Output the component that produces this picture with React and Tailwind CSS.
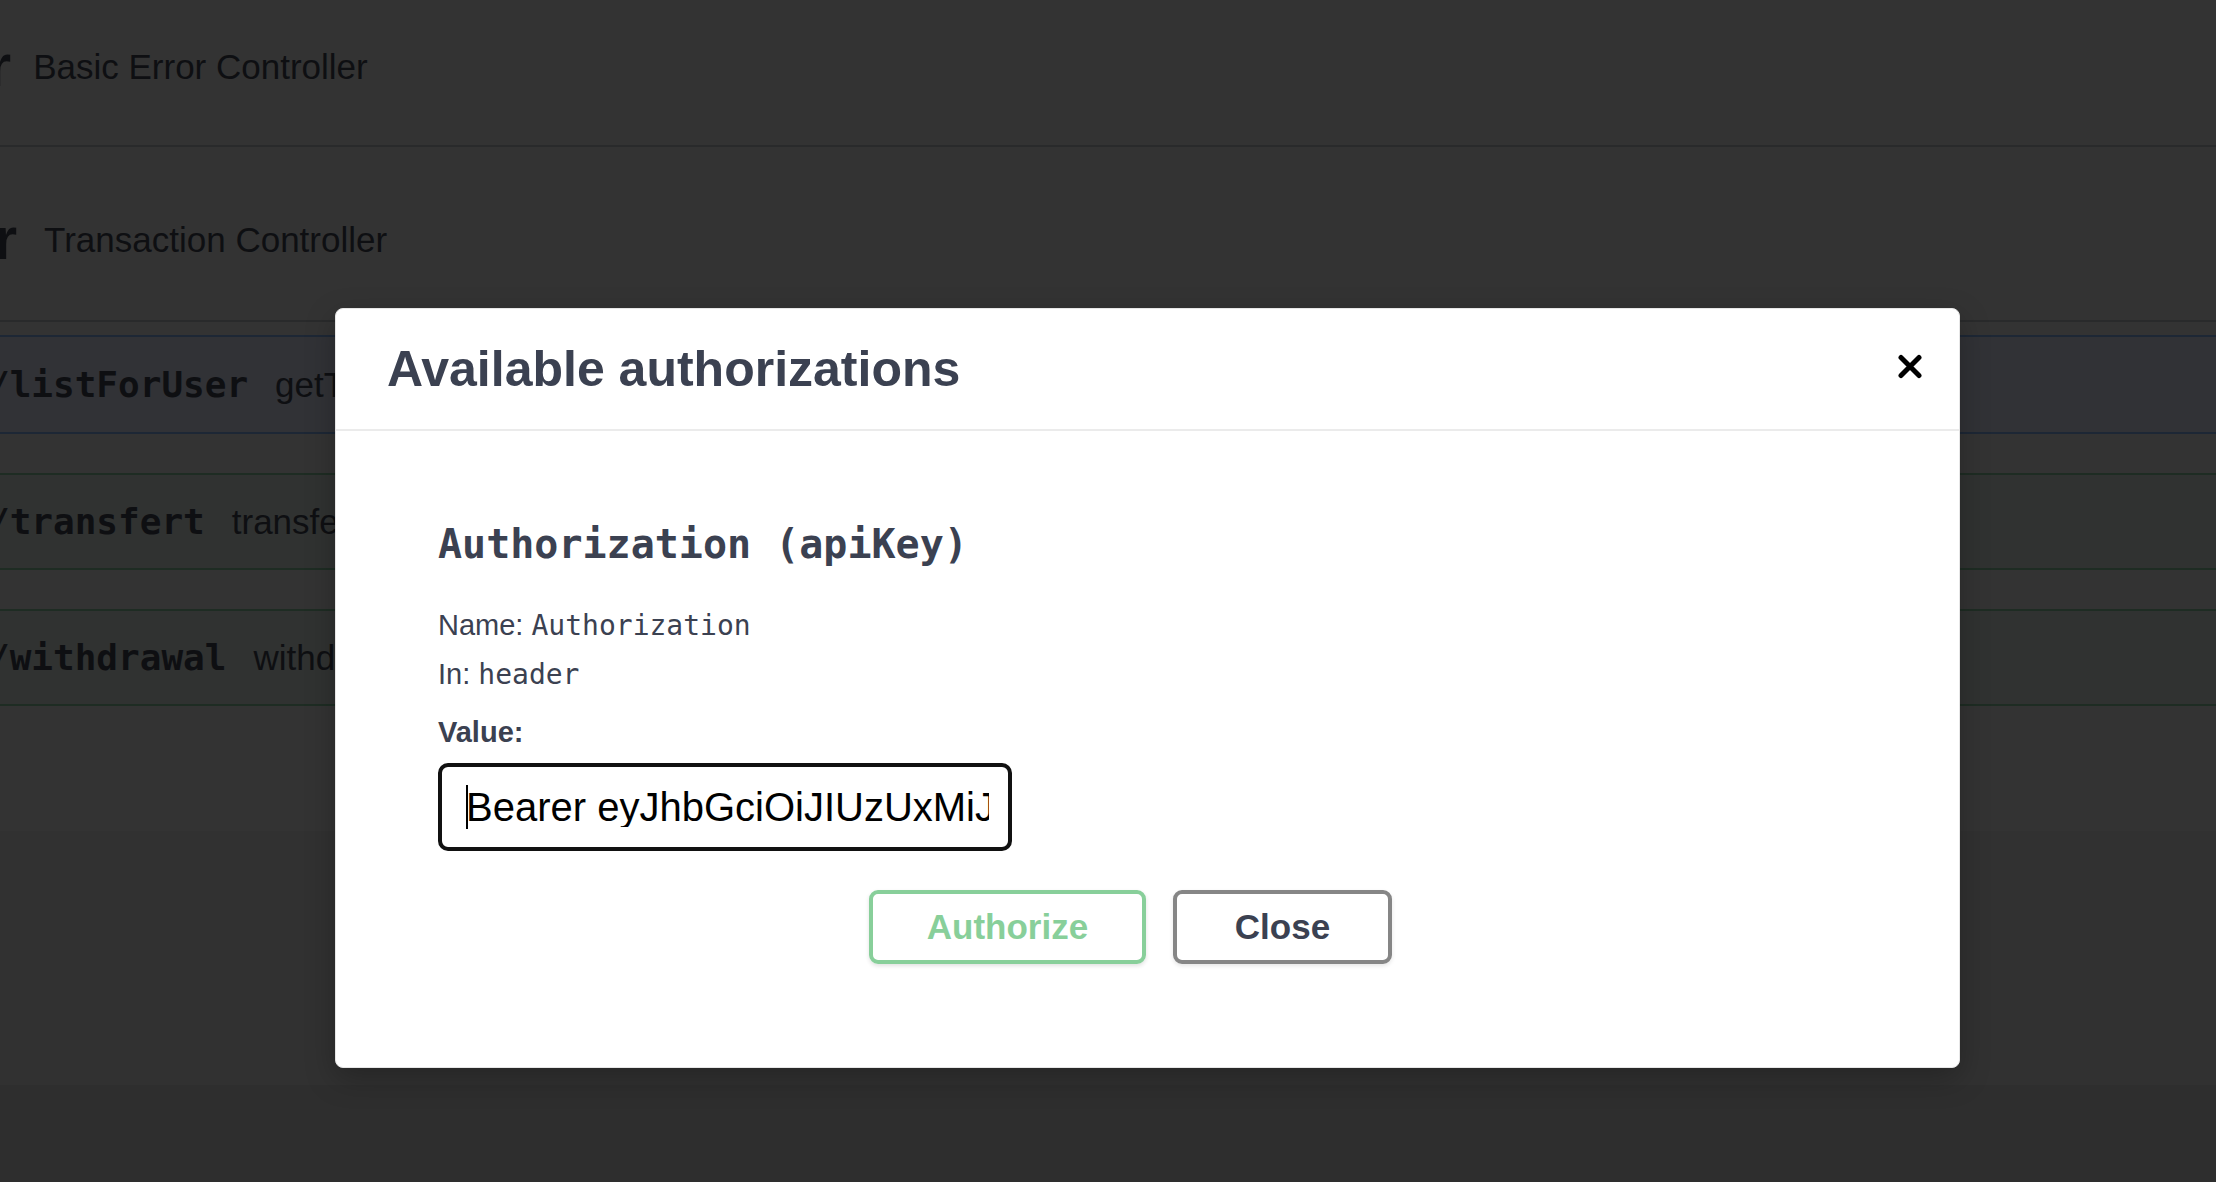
const mono = "font-['DejaVu_Sans_Mono','Liberation_Mono',monospace]";

function TagHeader({ name, title, nameShift, gap, height, pad }) {
  return (
    <div className={`flex items-center border-b-2 border-[#292a2b] ${height} ${pad}`}>
      <span className={`text-[60px] leading-none font-bold whitespace-nowrap ${nameShift}`}>{name}</span>
      <span className={`text-[35px] leading-none whitespace-nowrap ${gap}`}>{title}</span>
    </div>
  );
}

function OpRow({ path, summary, kind, height }) {
  const tone =
    kind === "get"
      ? "border-[#1d2735] bg-[#313236]"
      : "border-[#1e2c23] bg-[#303231]";
  return (
    <div className={`flex items-center border-y-2 ${tone} ${height}`}>
      <span className={`${mono} -ml-[12px] text-[36px] leading-none font-bold whitespace-nowrap`}>{path}</span>
      <span className="ml-[27px] text-[35px] leading-none whitespace-nowrap">{summary}</span>
    </div>
  );
}

function AuthModal() {
  return (
    <div className="absolute left-[335px] top-[308px] w-[1625px] overflow-hidden rounded-[8px] border border-[#e6e6e6] bg-white text-[#3b4151] shadow-[0_10px_30px_rgba(0,0,0,0.25)]">
      <div className="flex h-[122px] items-center justify-between border-b-2 border-[#ebebeb] pl-[51px] pr-[37px]">
        <h3 className="text-[50px] leading-none font-bold">Available authorizations</h3>
        <svg width="24" height="25" viewBox="0 0 24 25" className="-mt-[6px] text-black">
          <path d="M3 3.5 21 21.5M21 3.5 3 21.5" stroke="currentColor" strokeWidth="5" strokeLinecap="round" />
        </svg>
      </div>

      <div className="px-[102px] pt-[93px] pb-[103px]">
        <h4 className={`${mono} text-[40px] leading-none font-bold`}>Authorization (apiKey)</h4>
        <p className="mt-[47px] text-[29px] leading-none">
          Name: <span className={`${mono} text-[28px]`}>Authorization</span>
        </p>
        <p className="mt-[20px] text-[29px] leading-none">
          In: <span className={`${mono} text-[28px]`}>header</span>
        </p>
        <p className="mt-[29px] text-[29px] leading-none font-bold">Value:</p>

        <div className="mt-[16px] flex h-[88px] w-[574px] items-center rounded-[10px] border-4 border-[#111111] pl-[24px] pr-[19px]">
          <span className="h-[44px] w-[2px] shrink-0 bg-black" />
          <span className="-ml-[2px] overflow-hidden text-[40px] leading-none whitespace-nowrap text-black">
            Bearer eyJhbGciOiJIUzUxMiJ9.eyJzdWIiOiJ1c2VyQG1haWwuY29tIn0
          </span>
        </div>

        <div className="mt-[39px] flex justify-center gap-[27px] pr-[34px]">
          <button className="h-[74px] w-[277px] rounded-[9px] border-4 border-[#88cf9a] text-[35px] font-bold text-[#88cf9a] shadow-[0_2px_4px_rgba(0,0,0,0.12)]">
            Authorize
          </button>
          <button className="h-[74px] w-[219px] rounded-[9px] border-4 border-[#868686] text-[35px] font-bold text-[#3b4151] shadow-[0_2px_4px_rgba(0,0,0,0.1)]">
            Close
          </button>
        </div>
      </div>
    </div>
  );
}

export default function App() {
  return (
    <div className="relative h-[1182px] w-full overflow-hidden bg-[#2e2e2e] font-['Liberation_Sans',Arial,sans-serif] text-[#0e0f12]">
      <div className="h-[831px] bg-[#333333]">
        <TagHeader
          name="basic-error-controller"
          title="Basic Error Controller"
          nameShift="-ml-[599px]"
          gap="ml-[22px]"
          height="h-[147px]"
          pad="pb-[13px]"
        />
        <TagHeader
          name="transaction-controller"
          title="Transaction Controller"
          nameShift="-ml-[603px]"
          gap="ml-[27px]"
          height="h-[175px]"
          pad="pt-[11px]"
        />

        <div className="mt-[13px] flex flex-col gap-[39px]">
          <OpRow kind="get" path="/listForUser" summary="getTransactionsForUser" height="h-[99px]" />
          <OpRow kind="post" path="/transfert" summary="transfert" height="h-[97px]" />
          <OpRow kind="post" path="/withdrawal" summary="withdrawal" height="h-[97px]" />
        </div>
      </div>
      <div className="h-[254px] bg-[#313131]" />

      <AuthModal />
    </div>
  );
}
